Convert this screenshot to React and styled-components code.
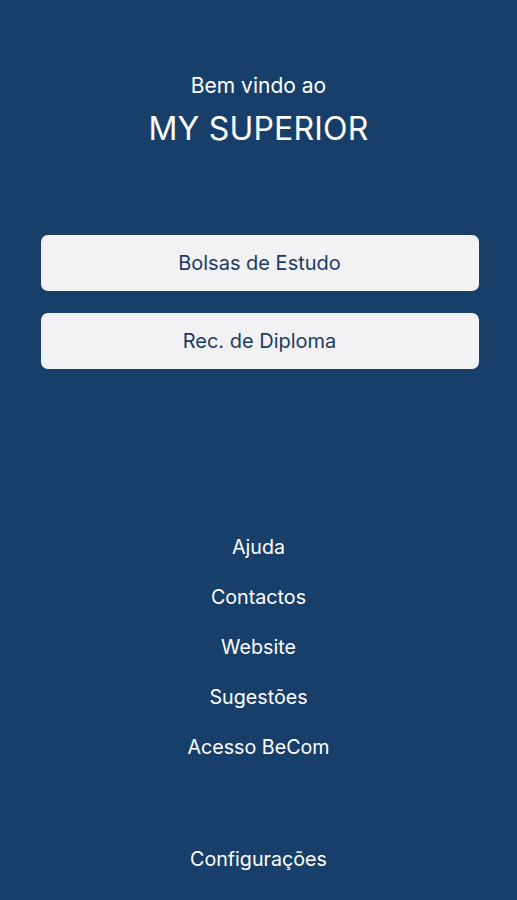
import React from "react";
import styled, { createGlobalStyle } from "styled-components";

const Global = createGlobalStyle`
  html, body { margin: 0; padding: 0; background: #183f6a; }
  body { font-family: Inter, "Noto Sans", sans-serif; -webkit-font-smoothing: antialiased; }
  * { box-sizing: border-box; }
`;

const Screen = styled.div`
  width: 517px;
  height: 900px;
  background: #183f6a;
  color: #ffffff;
  display: flex;
  flex-direction: column;
  align-items: center;
  padding-top: 72px;
`;

const Welcome = styled.div`
  font-size: 21px;
  line-height: 28px;
  font-weight: 400;
`;

const Title = styled.h1`
  margin: 8px 0 0;
  font-size: 32px;
  line-height: 42px;
  font-weight: 400;
  letter-spacing: 0.2px;
`;

const Buttons = styled.div`
  margin-top: 85px;
  width: 438px;
  margin-left: 2px;
  display: flex;
  flex-direction: column;
  gap: 22px;
`;

const MainButton = styled.button`
  height: 56px;
  width: 100%;
  border: none;
  border-radius: 7px;
  background: #f2f2f4;
  color: #1d3a64;
  font-family: inherit;
  font-size: 20px;
  font-weight: 400;
  cursor: pointer;
`;

const Links = styled.nav`
  margin-top: 165px;
  display: flex;
  flex-direction: column;
  align-items: center;
`;

const LinkItem = styled.a`
  height: 50px;
  line-height: 26px;
  font-size: 19.7px;
  color: #ffffff;
  text-decoration: none;
`;

const Settings = styled(LinkItem)`
  margin-top: auto;
  height: auto;
  margin-bottom: 28px;
`;

export default function App() {
  const links = ["Ajuda", "Contactos", "Website", "Sugestões", "Acesso BeCom"];
  return (
    <>
      <Global />
      <Screen>
        <Welcome>Bem vindo ao</Welcome>
        <Title>MY SUPERIOR</Title>
        <Buttons>
          <MainButton>Bolsas de Estudo</MainButton>
          <MainButton>Rec. de Diploma</MainButton>
        </Buttons>
        <Links>
          {links.map((l) => (
            <LinkItem key={l} href="#">{l}</LinkItem>
          ))}
        </Links>
        <Settings href="#">Configurações</Settings>
      </Screen>
    </>
  );
}
